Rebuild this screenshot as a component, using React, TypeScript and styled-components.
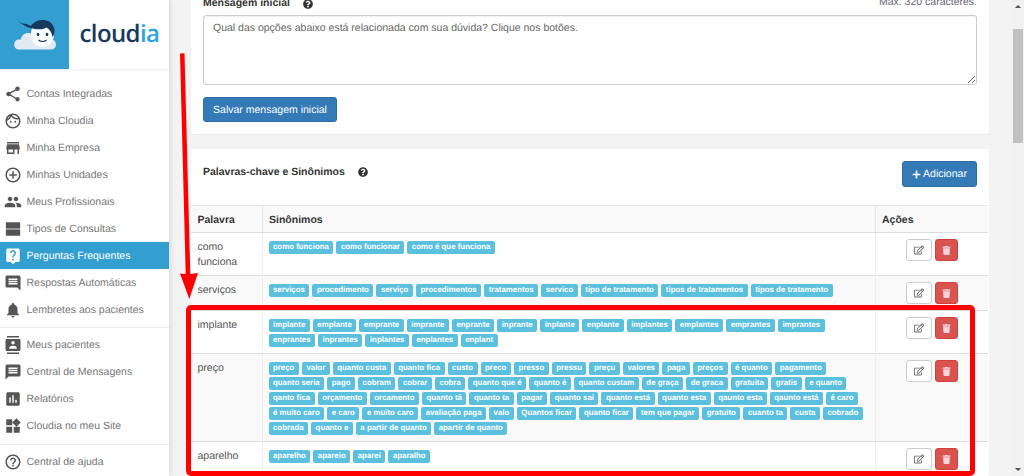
import React from "react";
import styled, { createGlobalStyle } from "styled-components";
import { MdShare, MdOutlineFace, MdStore, MdAddCircleOutline, MdPeople, MdLiveHelp, MdInsertComment, MdNotifications, MdContacts, MdMessage, MdAssessment, MdWidgets, MdHelpOutline } from "react-icons/md";
import { FaPlus, FaQuestionCircle, FaRegEdit, FaTrash } from "react-icons/fa";

const Global = createGlobalStyle`
  html, body { margin: 0; padding: 0; background: #f3f3f3; overflow: hidden; }
  * { box-sizing: border-box; }
  body { text-rendering: geometricPrecision; }
  button, textarea { text-rendering: geometricPrecision; }
`;

const Page = styled.div`
  position: relative; width: 1024px; height: 476px; overflow: hidden; display: flex;
  font-family: "Liberation Sans", Arial, sans-serif; background: #f3f3f3;
`;
const Sidebar = styled.aside`
  width: 169px; flex: none; background: #fff; height: 476px; box-shadow: 1px 0 6px rgba(0,0,0,.12); z-index: 1;
`;
const Brand = styled.div`
  height: 69px; display: flex; align-items: center; box-shadow: 0 1px 2px rgba(0,0,0,.08);
`;
const BrandBox = styled.div`
  width: 69px; height: 69px; background: #329fd0; display: flex; align-items: center; justify-content: center;
`;
const BrandName = styled.div`
  margin-left: 10.5px; font-family: "Open Sans", sans-serif; font-weight: 600; font-size: 24px; letter-spacing: -0.6px; color: #173a5c; line-height: 1; padding-bottom: 2px;
  span { color: #2aa5e0; }
`;
const Nav = styled.nav`
  padding-top: 11px;
`;
const NavItem = styled.div<{ $active?: boolean }>`
  height: 27px; display: flex; align-items: center; font-size: 10.5px; padding-left: 4px;
  color: ${p => (p.$active ? "#fff" : "#777")};
  background: ${p => (p.$active ? "#329fd0" : "transparent")};
  svg { flex: none; width: 18px; height: 18px; color: ${p => (p.$active ? "#fff" : "#555")}; margin-right: 4.5px; }
`;
const NavRule = styled.div<{ $after?: number }>`
  height: 1px; background: #eee; margin: ${p => p.$after ?? 4}px 0 3px;
`;

const Content = styled.main`
  flex: 1; min-width: 0; padding-left: 22px; height: 476px; overflow: hidden;
`;
const Card = styled.section`
  width: 798px; background: #fff; border-radius: 3px; box-shadow: 0 1px 1px rgba(0,0,0,.03);
`;
const MessageCard = styled(Card)`
  margin-top: -14px; padding: 10px 12px 12px; margin-bottom: 15px;
`;
const KeywordCard = styled(Card)`
  padding-top: 12px;
`;
const TitleRow = styled.div`
  display: flex; justify-content: space-between; height: 15px; margin-bottom: 4px;
`;
const Title = styled.div`
  font-size: 10.5px; font-weight: bold; color: #333; line-height: 15px; display: flex; align-items: center;
  svg { width: 10px; height: 10px; color: #333; margin-left: 13px; }
`;
const KeywordTitle = styled(Title)`
  margin-bottom: 4px;
`;
const Limit = styled.div`
  font-size: 10.5px; color: #667; line-height: 12px;
`;
const Message = styled.textarea`
  display: block; width: 100%; height: 70px; border: 1px solid #ccc; border-radius: 3px; padding: 5px 9px; margin: 0 0 12px;
  font: 10.5px/15px "Liberation Sans", Arial, sans-serif; color: #666; outline: none; box-shadow: inset 0 1px 1px rgba(0,0,0,.06);
`;
const PrimaryButton = styled.button`
  display: inline-flex; align-items: center; justify-content: center; height: 25px; padding: 0; border: 1px solid #2e6da4; border-radius: 3px;
  background: #337ab7; color: #fff; font: 10.5px "Liberation Sans", Arial, sans-serif;
  svg { width: 9px; height: 9px; margin-right: 2px; }
`;
const SaveButton = styled(PrimaryButton)`
  width: 134px;
`;
const AddButton = styled(PrimaryButton)`
  width: 75px; height: 26px;
`;
const KeywordHead = styled.div`
  display: flex; justify-content: space-between; align-items: center; height: 26px; padding: 0 12px; margin-bottom: 18px;
`;
const Table = styled.table`
  width: 797px; border-collapse: collapse; table-layout: fixed; font-size: 10.5px; color: #555;
`;
const Th = styled.th<{ $w?: number }>`
  width: ${p => (p.$w ? `${p.$w}px` : "auto")}; height: 27px; text-align: left; font-size: 10.5px; color: #333; padding: 1px 6.5px 0; background: #f9f9f9;
  border: 1px solid #e6e6e6; border-left: none; border-bottom: 1px solid #ddd;
  &:last-child { border-right: none; }
`;
const Tr = styled.tr<{ $striped?: boolean }>`
  background: ${p => (p.$striped ? "#f9f9f9" : "#fff")};
`;
const Td = styled.td`
  vertical-align: top; padding: 6px 6.5px; line-height: 15px; border-top: 1px solid #ddd; border-right: 1px solid #eee;
  &:last-child { border-right: none; }
`;
const WordTd = styled(Td)`
  padding: 7px 6.5px 5px;
`;
const Tags = styled.div`
  display: flex; flex-wrap: wrap; gap: 2px 3px; margin: 2px 0 0 -0.5px;
`;
const Tag = styled.span`
  height: 13px; background: #5bc0de; color: #fff; font-size: 7.875px; font-weight: bold; line-height: 12px; padding: 0 4.5px; border-radius: 2px; white-space: nowrap;
`;
const Actions = styled.div`
  display: flex; justify-content: flex-end; gap: 3px; padding-right: 24px;
`;
const EditButton = styled.button`
  width: 26px; height: 22px; padding: 0; background: #fff; border: 1px solid #ccc; border-radius: 3px; display: flex; align-items: center; justify-content: center;
  svg { width: 10px; height: 10px; color: #666; }
`;
const DeleteButton = styled.button`
  width: 23px; height: 22px; padding: 0; background: #d9534f; border: 1px solid #d43f3a; border-radius: 3px; display: flex; align-items: center; justify-content: center;
  svg { width: 9px; height: 9px; color: #fbd3de; }
`;
const Scrollbar = styled.div`
  flex: none; width: 12px; height: 476px; background: #f1f1f1; display: flex; flex-direction: column; align-items: center;
`;
const ScrollArrow = styled.div<{ $down?: boolean }>`
  width: 0; height: 0; margin-top: ${p => (p.$down ? "auto" : "5px")}; margin-bottom: ${p => (p.$down ? "5px" : "0")};
  border-left: 3px solid transparent; border-right: 3px solid transparent;
  ${p => (p.$down ? "border-top: 3px solid #505050;" : "border-bottom: 3px solid #505050;")}
`;
const ScrollThumb = styled.div`
  width: 10px; height: 114px; margin-top: 21px; background: #c1c1c1;
`;
const Highlight = styled.div`
  position: absolute; left: 186px; top: 305px; width: 789px; height: 171px; border: 5px solid #f00; border-radius: 5px; z-index: 2; pointer-events: none;
`;
const ArrowArt = styled.svg`
  position: absolute; left: 170px; top: 50px; z-index: 2; pointer-events: none;
`;

const TwoBars = () => (
  <svg viewBox="0 0 24 24" fill="currentColor" aria-hidden="true">
    <rect x="2.500" y="3" width="19" height="8.500" />
    <rect x="2.500" y="12.500" width="19" height="8.500" />
  </svg>
);

const nav1 = [
  [MdShare, "Contas Integradas"], [MdOutlineFace, "Minha Cloudia"], [MdStore, "Minha Empresa"],
  [MdAddCircleOutline, "Minhas Unidades"], [MdPeople, "Meus Profissionais"], [TwoBars, "Tipos de Consultas"],
  [MdLiveHelp, "Perguntas Frequentes"], [MdInsertComment, "Respostas Automáticas"], [MdNotifications, "Lembretes aos pacientes"],
] as const;
const nav2 = [
  [MdContacts, "Meus pacientes"], [MdMessage, "Central de Mensagens"], [MdAssessment, "Relatórios"], [MdWidgets, "Cloudia no meu Site"],
] as const;

const rows: { word: React.ReactNode; tags: string[] }[] = [
  { word: <>como<br />funciona</>, tags: ["como funciona", "como funcionar", "como é que funciona"] },
  { word: "serviços", tags: ["serviços", "procedimento", "serviço", "procedimentos", "tratamentos", "servico", "tipo de tratamento", "tipos de tratamentos", "tipos de tratamento"] },
  { word: "implante", tags: ["implante", "emplante", "emprante", "imprante", "enprante", "inprante", "inplante", "enplante", "implantes", "emplantes", "emprantes", "imprantes", "enprantes", "inprantes", "inplantes", "enplantes", "enplant"] },
  { word: "preço", tags: ["preço", "valor", "quanto custa", "quanto fica", "custo", "preco", "presso", "pressu", "preçu", "valores", "paga", "preços", "é quanto", "pagamento", "quanto seria", "pago", "cobram", "cobrar", "cobra", "quanto que é", "quanto é", "quanto custam", "de graça", "de graca", "gratuita", "gratis", "e quanto", "qanto fica", "orçamento", "orcamento", "quanto tá", "quanto ta", "pagar", "quanto sai", "quanto está", "quanto esta", "qaunto esta", "qaunto está", "é caro", "é muito caro", "e caro", "e muito caro", "avaliação paga", "valo", "Quantos ficar", "quanto ficar", "tem que pagar", "gratuito", "cuanto ta", "custa", "cobrado", "cobrada", "quanto e", "a partir de quanto", "apartir de quanto"] },
  { word: "aparelho", tags: ["aparelho", "apareio", "aparei", "aparalho"] },
];

export default function App() {
  return (
    <Page>
      <Global />
      <Sidebar>
        <Brand>
          <BrandBox>
            <svg width="44" height="32" viewBox="0 0 44 32" aria-hidden="true">
              <path d="M6 30.500c-3 0-4.800-2.200-4.800-5 0-3 2.200-5 5-5 .6 0 1 .1 1.500.2C8.500 16.500 11.500 14 15 14c1.500 0 2.500.3 3.500 1L35 12c3 2 4.500 5 4 8.500 2.500.5 4 2.500 4 5 0 3-2.200 5-5 5z" fill="#dfeaf3" />
              <path d="M18 15c0 8 5 13 11.500 13S41 23 41 15 36 3 29.500 3 18 7 18 15z" fill="#fbfcfd" />
              <path d="M5 2c2 2 5 3 9 3 1.500 1 2.500 1.500 4 1.500C21 2.500 26 .5 31 1c6 .6 10 5 10.500 10 .2 3-.6 5.500-2 7-1-5-3-8-6-9.500-3 2-9 2.500-13.500 1-4-.5-7-1.500-10-4C8 4.500 6 3.500 5 2z" fill="#173a5c" />
              <ellipse cx="25" cy="15.500" rx="1.300" ry="1.700" fill="#173a5c" /><ellipse cx="34" cy="15.500" rx="1.300" ry="1.700" fill="#173a5c" />
              <path d="M25.500 21c2 2 6 2 8 0" stroke="#173a5c" strokeWidth="1.100" fill="none" />
            </svg>
          </BrandBox>
          <BrandName>cloud<span>ia</span></BrandName>
        </Brand>
        <Nav>
          {nav1.map(([Icon, label]) => (
            <NavItem key={label} $active={label === "Perguntas Frequentes"}><Icon />{label}</NavItem>
          ))}
          <NavRule />
          {nav2.map(([Icon, label]) => (
            <NavItem key={label}><Icon />{label}</NavItem>
          ))}
          <NavRule $after={5} />
          <NavItem><MdHelpOutline />Central de ajuda</NavItem>
        </Nav>
      </Sidebar>
      <Content>
        <MessageCard>
          <TitleRow>
            <Title>Mensagem inicial<FaQuestionCircle /></Title>
            <Limit>Max. 320 caracteres.</Limit>
          </TitleRow>
          <Message readOnly defaultValue="Qual das opções abaixo está relacionada com sua dúvida? Clique nos botões." />
          <SaveButton>Salvar mensagem inicial</SaveButton>
        </MessageCard>
        <KeywordCard>
          <KeywordHead>
            <KeywordTitle>Palavras-chave e Sinônimos<FaQuestionCircle /></KeywordTitle>
            <AddButton><FaPlus />Adicionar</AddButton>
          </KeywordHead>
          <Table>
            <thead>
              <tr><Th $w={71}>Palavra</Th><Th>Sinônimos</Th><Th $w={113}>Ações</Th></tr>
            </thead>
            <tbody>
              {rows.map((r, i) => (
                <Tr key={i} $striped={i % 2 === 1}>
                  <WordTd>{r.word}</WordTd>
                  <Td><Tags>{r.tags.map(t => <Tag key={t}>{t}</Tag>)}</Tags></Td>
                  <Td><Actions><EditButton><FaRegEdit /></EditButton><DeleteButton><FaTrash /></DeleteButton></Actions></Td>
                </Tr>
              ))}
            </tbody>
          </Table>
        </KeywordCard>
      </Content>
      <Scrollbar>
        <ScrollArrow />
        <ScrollThumb />
        <ScrollArrow $down />
      </Scrollbar>
      <Highlight />
      <ArrowArt width="32" height="252" viewBox="0 0 32 252" aria-hidden="true">
        <path d="M10 3.500 L14.500 3.300 L20.300 224 L28 223 L19.300 249 L10 223.500 L15.700 224 Z" fill="#f00" />
      </ArrowArt>
    </Page>
  );
}
